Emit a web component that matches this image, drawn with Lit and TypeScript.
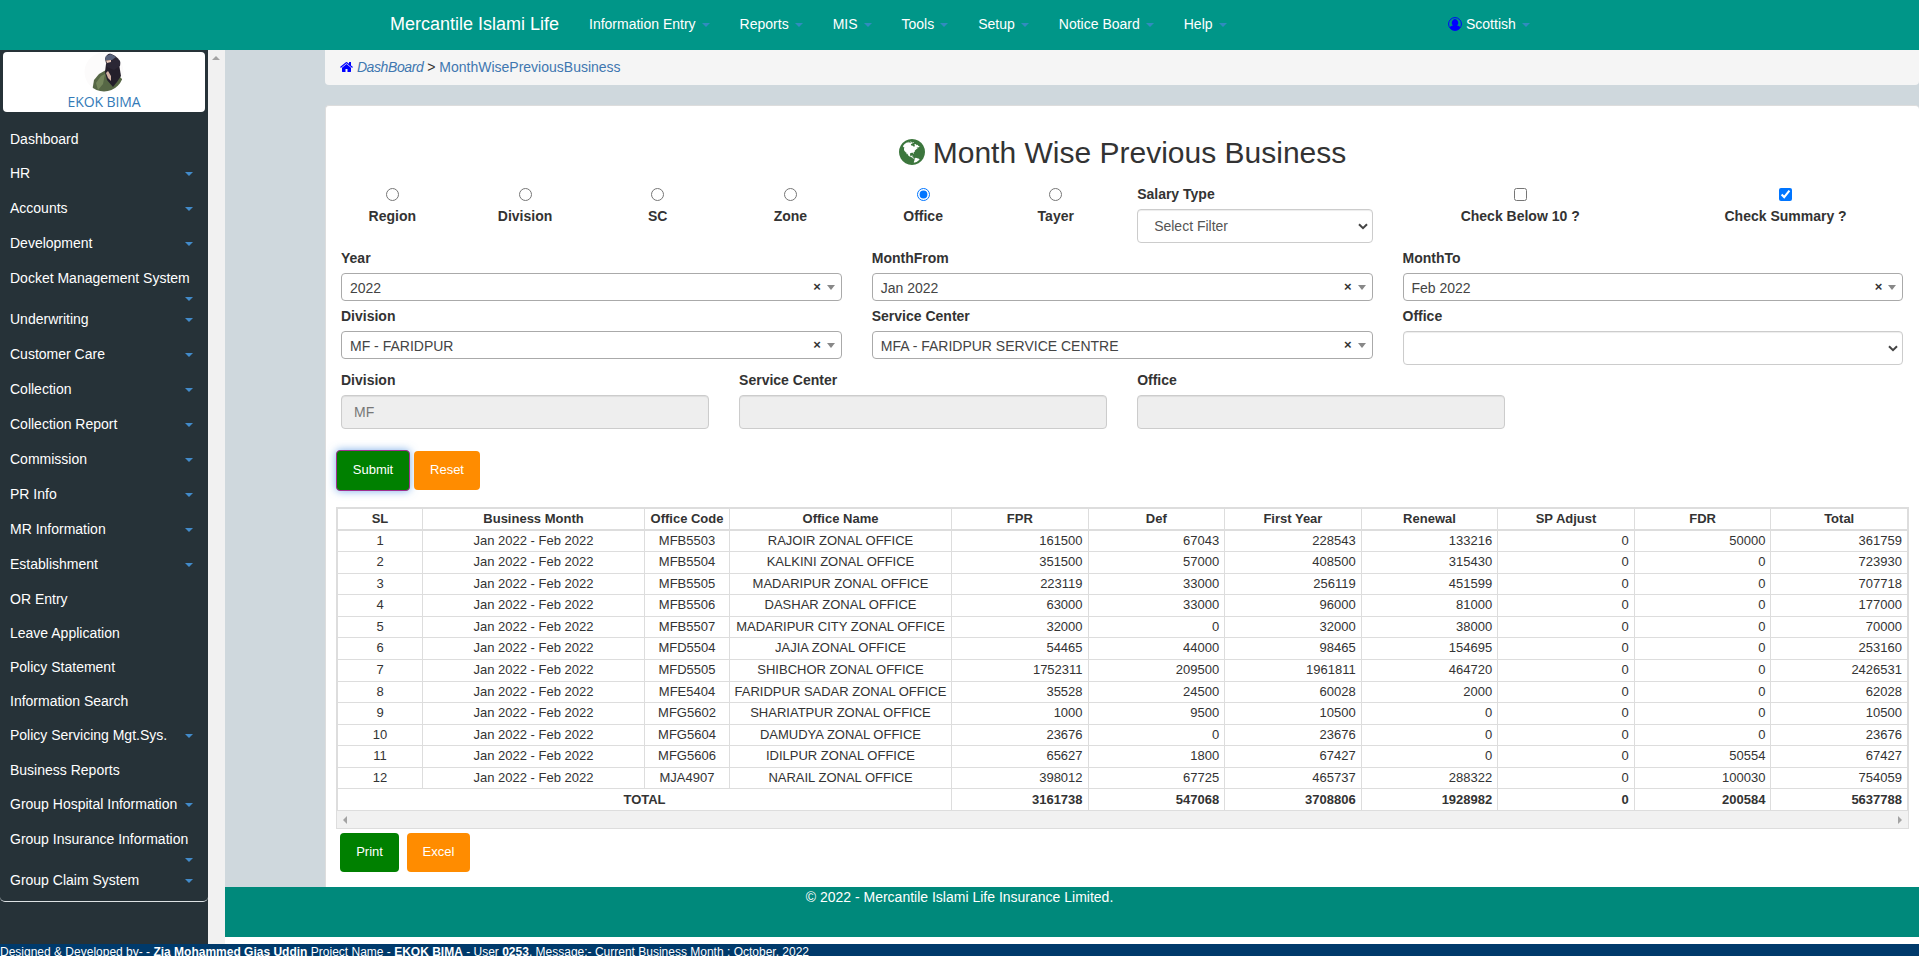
import { LitElement, html, css, svg, nothing } from "lit";
import { customElement } from "lit/decorators.js";

const MENU: [string, boolean, boolean?][] = [
  ["Dashboard", false], ["HR", true], ["Accounts", true], ["Development", true],
  ["Docket Management System", true, true], ["Underwriting", true], ["Customer Care", true],
  ["Collection", true], ["Collection Report", true], ["Commission", true], ["PR Info", true],
  ["MR Information", true], ["Establishment", true], ["OR Entry", false], ["Leave Application", false],
  ["Policy Statement", false], ["Information Search", false], ["Policy Servicing Mgt.Sys.", true],
  ["Business Reports", false], ["Group Hospital Information", true],
  ["Group Insurance Information", true, true], ["Group Claim System", true],
];
const NAV = ["Information Entry", "Reports", "MIS", "Tools", "Setup", "Notice Board", "Help"];
const LEVELS = ["Region", "Division", "SC", "Zone", "Office", "Tayer"];
const HEAD = ["SL", "Business Month", "Office Code", "Office Name", "FPR", "Def", "First Year", "Renewal", "SP Adjust", "FDR", "Total"];
const ROWS: [string, string, number[]][] = [
  ["MFB5503", "RAJOIR ZONAL OFFICE", [161500, 67043, 228543, 133216, 0, 50000, 361759]],
  ["MFB5504", "KALKINI ZONAL OFFICE", [351500, 57000, 408500, 315430, 0, 0, 723930]],
  ["MFB5505", "MADARIPUR ZONAL OFFICE", [223119, 33000, 256119, 451599, 0, 0, 707718]],
  ["MFB5506", "DASHAR ZONAL OFFICE", [63000, 33000, 96000, 81000, 0, 0, 177000]],
  ["MFB5507", "MADARIPUR CITY ZONAL OFFICE", [32000, 0, 32000, 38000, 0, 0, 70000]],
  ["MFD5504", "JAJIA ZONAL OFFICE", [54465, 44000, 98465, 154695, 0, 0, 253160]],
  ["MFD5505", "SHIBCHOR ZONAL OFFICE", [1752311, 209500, 1961811, 464720, 0, 0, 2426531]],
  ["MFE5404", "FARIDPUR SADAR ZONAL OFFICE", [35528, 24500, 60028, 2000, 0, 0, 62028]],
  ["MFG5602", "SHARIATPUR ZONAL OFFICE", [1000, 9500, 10500, 0, 0, 0, 10500]],
  ["MFG5604", "DAMUDYA ZONAL OFFICE", [23676, 0, 23676, 0, 0, 0, 23676]],
  ["MFG5606", "IDILPUR ZONAL OFFICE", [65627, 1800, 67427, 0, 0, 50554, 67427]],
  ["MJA4907", "NARAIL ZONAL OFFICE", [398012, 67725, 465737, 288322, 0, 100030, 754059]],
];
const TOTALS = [3161738, 547068, 3708806, 1928982, 0, 200584, 5637788];

const GLOBE = "M896 128q209 0 385.500 103t279.500 279.500 103 385.500-103 385.500-279.500 279.500-385.500 103-385.500-103-279.500-279.500-103-385.500 103-385.500 279.500-279.500 385.500-103zm274 521q-2 1-9.500 9.500t-13.500 9.500q2 0 4.500-5t5-11 3.500-7q6-7 22-15 14-6 52-12 34-8 51 11-2-2 9.500-13t14.500-12q3-2 15-4.500t15-7.500l2-22q-12 1-17.500-7t-6.500-21q0 2-6 8 0-7-4.500-8t-11.500 1-9 1q-10-3-15-7.500t-8-16.500-4-15q-2-5-9.500-11t-9.500-10q-1-2-2.500-5.500t-3-6.500-4-5.500-5.500-2.500-7 5-7.500 10-4.500 5q-3-2-6-1.500t-4.500 1-4.500 3-5 3.500q-3 2-8.500 3t-8.500 2q15-5-1-11-10-4-16-3 9-4 7.500-12t-8.500-14h5q-1-4-8.500-8.500t-17.500-8.500-13-6q-8-5-34-9.500t-33-.5q-5 6-4.500 10.500t4 14 3.500 12.500q1 6-5.500 13t-6.500 12q0 7 14 15.500t10 21.500q-3 8-16 16t-16 12q-5 8-1.500 18.500t10.500 16.500q2 2 1.500 4t-3.500 4.500-5.500 4-6.500 3.500l-3 2q-11 5-20.500-6t-13.500-26q-7-25-16-30-23-8-29 1-5-13-41-26-25-9-58-4 6-1 0-15-7-15-19-12 3-6 4-17.500t1-13.500q3-13 12-23 1-1 7-8.500t9.500-13.500.5-6q35 4 50-11 5-5 11.500-17t10.500-17q9-6 14-5.500t14.500 5.500 14.500 5q14 1 15.500-11t-7.500-20q12 1 3-17-4-7-8-9-12-4-27 5-8 4 2 8-1-1-9.500 10.500t-16.500 17.500-16-5q-1-1-5.500-13.500t-9.500-13.500q-8 0-16 15 3-8-11-15t-24-8q19-12-8-27-7-4-20.500-5t-19.500 4q-5 7-5.500 11.500t5 8 10.500 5.500 11.500 4 8.500 3q14 10 8 14-2 1-8.500 3.500t-11.500 4.500-6 4q-3 4 0 14t-2 14q-5-5-9-17.500t-7-16.500q7 9-25 6l-10-1q-4 0-16 2t-20.500 1-13.500-8q-4-8 0-20 1-4 4-2-4-3-11-9.500t-10-8.500q-46 15-94 41 6 1 12-1 5-2 13-6.500t10-5.500q34-14 42-7l5-5q14 16 20 25-7-4-30-1-20 6-22 12 7 12 5 18-4-3-11.500-10t-14.500-11-15-5q-16 0-22 1-146 80-235 222 7 7 12 8 4 1 5 9t2.500 11 11.500-3q9 8 3 19 1-1 44 27 19 17 21 21 3 11-10 18-1-2-9-9t-9-4q-3 5 .5 18.500t10.500 12.500q-7 0-9.500 16t-2.500 35.500-1 23.500l2 1q-3 12 5.500 34.500t21.500 19.500q-13 3 20 43 6 8 8 9 3 2 12 7.500t15 10 10 10.500q4 5 10 22.500t14 23.500q-2 6 9.500 20t10.500 23q-1 0-2.500 1t-2.500 1q3 7 15.500 14t15.500 13q1 3 2 10t3 11 8 2q2-20-24-62-15-25-17-29-3-5-5.500-15.500t-4.500-14.500q2 0 6 1.500t8.500 3.500 7.500 4 2 3q-3 7 2 17.500t12 18.500 17 19 12 13q6 6 14 19.500t0 13.500q9 0 20 10.500t17 19.500q5 8 8 26t5 24q2 7 8.500 13.500t12.500 9.500l16 8 13 7q5 2 18.500 10.500t21.500 11.500q10 4 16 4t14.500-2.500 13.500-3.500q15-2 29 15t21 21q36 19 55 11-2 1 .5 7.500t8 15.500 9 14.500 5.500 8.500q5 6 18 15t18 15q6-4 7-9-3 8 7 20t18 10q14-3 14-32-31 15-49-18 0-1-2.500-5.500t-4-8.500-2.500-8.500 0-7.500 5-3q9 0 10-3.500t-2-12.500-4-13q-1-8-11-20t-12-15q-5 9-16 8t-16-9q0 1-1.500 5.500t-1.500 6.500q-13 0-15-1 1-3 2.500-17.500t3.500-22.500q1-4 5.500-12t7.500-14.500 4-12.500-4.500-9.500-17.500-2.500q-19 1-26 20-1 3-3 10.500t-5 11.500-9 7q-7 3-24 2t-24-5q-13-8-22.500-29t-9.500-37q0-10 2.500-26.500t3-25-5.500-24.500q3-2 9-9.500t10-10.500q2-1 4.500-1.500t4.500 0 4-1.500 3-6q-1-1-4-3-3-3-4-3 7 3 28.500-1.500t27.500 1.500q15 11 22-2 0-1-2.500-9.500t-.5-13.500q5 27 29 9 3 3 15.500 5t17.500 5q3 2 7 5.500t5.500 4.500 5-.5 8.500-6.500q10 14 12 24 11 40 19 44 7 3 11 2t4.500-9.500 0-14-1.500-12.500l-1-8v-18l-1-8q-15-3-18.500-12t1.500-18.500 15-18.500q1-1 8-3.500t15.500-6.500 12.500-8q21-19 15-35 7 0 11-9-1 0-5-3t-7.500-5-4.500-2q9-5 2-16 5-3 7.500-11t7.500-10q9 12 21 2 8-8 1-16 5-7 20.500-10.500t18.500-9.500q7 2 8-2t1-12 3-12q4-5 15-9t13-5l17-11q3-4 0-4 18 2 31-11 10-11-6-20 3-6-3-9.500t-15-5.500q3-1 11.500-.5t10.500-1.500q15-10-7-16-17-5-43 12zm-163 877q206-36 351-189-3-3-12.500-4.500t-12.500-3.500q-18-7-24-8 1-7-2.500-13t-8-9-12.500-8-11-7q-2-2-7-6t-7-5.500-7.500-4.500-8.500-2-10 1l-3 1q-3 1-5.500 2.500t-5.500 3-4 3 0 2.500q-21-17-36-22-5-1-11-5.500t-10.500-7-10-1.500-11.500 7q-5 5-6 15t-2 13q-7-5 0-17.500t2-18.500q-3-6-10.500-4.500t-12 4.500-11.500 8.500-9 6.500-8.500 5.500-8.500 7.500q-3 4-6 12t-5 11q-2-4-11.500-6.500t-9.500-5.500q2 10 4 35t5 38q7 31-12 48-27 25-29 40-4 22 12 26 0 7-8 20.500t-7 21.500q0 6 2 16z";
const HOME = "M1472 992v480q0 26-19 45t-45 19h-384v-384h-256v384h-384q-26 0-45-19t-19-45v-480q0-1 .5-3t.5-3l575-474 575 474q1 2 1 6zm223-69l-62 74q-8 9-21 11h-3q-13 0-21-7l-692-577-692 577q-12 8-24 7-13-2-21-11l-62-74q-8-10-7-23.500t11-21.500l719-599q32-26 76-26t76 26l244 204v-195q0-14 9-23t23-9h192q14 0 23 9t9 23v408l219 182q10 8 11 21.500t-7 23.500z";

const caret = html`<i class="caret"></i>`;
const chevron = html`<svg class="chev" viewBox="0 0 10 7"><path d="M1 1.2 5 5.2 9 1.2" fill="none" stroke="#444" stroke-width="2"/></svg>`;
const combo = (label: string, value: string) => html`
  <div class="c4"><label>${label}</label>
    <div class="combo"><span>${value}</span><b>×</b><i></i></div></div>`;

@customElement("app-root")
export class AppRoot extends LitElement {
  static styles = css`
    :host { display: flex; flex-direction: column; height: 956px; overflow: hidden; background: #fff;
      font: 14px/20px "Liberation Sans", Arial, sans-serif; color: #333; }
    * { box-sizing: border-box; }
    .caret { display: inline-block; flex: none; border: 4px solid transparent; border-top-color: #428bca; border-bottom: 0; }
    header { flex: none; height: 50px; background: #009688; color: #fff; display: flex; padding-left: 390px; align-items: center; padding-bottom: 2px; }
    .brand { font-size: 18px; width: 199px; white-space: nowrap; }
    .nav { display: flex; gap: 30px; width: 859px; }
    .nav span, .user { display: flex; align-items: center; gap: 6px; white-space: nowrap; }
    header .caret { border-top-color: #318bc0; margin-top: 2px; }
    .user svg { width: 14px; height: 14px; margin-right: -2px; }
    .middle { flex: none; height: 894px; display: flex; }
    aside { width: 208px; background: #263238; color: #fff; flex: none; }
    .menu { height: 852px; border-bottom: 1px solid #dde2e4; border-radius: 0 0 5px 5px; padding-top: 2px; }
    .logo { margin: 0 3px 10px; height: 60px; background: #fff; border-radius: 4px; display: flex; flex-direction: column; align-items: center; }
    .logo svg { width: 40px; height: 40px; }
    .logo span { color: #337ab7; font: 14px/20px "Open Sans", sans-serif; letter-spacing: -.1px; }
    .mi { height: 34px; padding: 7px 15px 0 10px; display: flex; flex-wrap: wrap; justify-content: space-between; align-content: flex-start; white-space: nowrap; }
    .mi.drop { height: 35px; }
    .mi .caret { margin-top: 9px; margin-left: auto; }
    .mi.wrap { height: 41px; display: block; }
    .mi.wrap .caret { display: block; width: 8px; }
    .sbar { width: 17px; flex: none; background: #f1f1f1; padding: 6px 0 0 4px; }
    .sbar i { display: block; width: 0; border: 4px solid transparent; border-bottom-color: #a3a3a3; border-top: 0; }
    main { flex: 1; min-width: 0; display: flex; flex-direction: column; }
    .stage { height: 837px; background: #cfd8dd; padding-left: 100px; }
    .crumb { height: 35px; background: #f5f5f5; border-radius: 0 0 4px 4px; padding: 7px 0 0 15px; }
    .crumb svg { width: 13px; height: 14px; fill: #00f; vertical-align: -2px; }
    .crumb a, .crumb em { color: #3f77b0; }
    .crumb em { letter-spacing: -.4px; }
    .card { margin-top: 20px; height: 782px; background: #fff; border: 1px solid #ddd; border-width: 1px 0 0 1px; border-radius: 4px 4px 0 0; }
    h2 { margin: 0; padding-top: 30px; height: 78px; font-size: 30px; font-weight: 400; line-height: 33px; display: flex; justify-content: center; gap: 8px; }
    h2 svg { width: 26px; height: 26px; margin-top: 3px; fill: #3c763d; }
    .row { display: grid; grid-template-columns: repeat(12, 132.7px); }
    .row > div { padding: 0 15px; }
    .c1 { grid-column: span 1; } .c2 { grid-column: span 2; } .c3 { grid-column: span 3; } .c4 { grid-column: span 4; }
    label { display: block; font-weight: 700; height: 25px; }
    .tick { text-align: center; }
    .tick input { display: block; width: 13px; height: 13px; margin: 4px auto 5px; accent-color: #0075ff; }
    .r1 { height: 64px; } .r2 { height: 58px; } .r3 { height: 64px; } .r4 { height: 81px; }
    .sel { height: 34px; border: 1px solid #ccc; border-radius: 4px; background: #fff; box-shadow: inset 0 1px 1px rgba(0,0,0,.075);
      padding: 0 4px 0 16px; color: #555; display: flex; align-items: center; justify-content: space-between; }
    .chev { width: 10px; height: 7px; margin-left: auto; }
    .inp { height: 34px; border: 1px solid #ccc; border-radius: 4px; background: #eee; box-shadow: inset 0 1px 1px rgba(0,0,0,.075); padding: 6px 12px; color: #777; }
    .combo { height: 28px; border: 1px solid #aaa; border-radius: 4px; display: flex; align-items: center; padding: 1px 6px 0 8px; color: #444; }
    .combo span { flex: 1; }
    .combo b { font-size: 13px; margin: -1px 6px 0 0; color: #333; }
    .combo i { flex: none; border: 4px solid transparent; border-top: 5px solid #888; border-bottom: 0; }
    .btns { display: flex; }
    .btn { height: 39px; border-radius: 4px; color: #fff; text-align: center; padding-top: 9px; font-size: 13px; }
    .green { background: #008000; } .orange { background: #ff8c00; }
    .submit { width: 74px; height: 41px; margin: -1px 4px 0 10px; border: 1px solid #a03090; box-shadow: 0 0 8px rgba(82,148,226,.75); }
    .reset { width: 66px; } .print { width: 59px; margin: 0 8px 0 14px; } .excel { width: 63px; }
    .tw { margin: 16px 10px 0 10px; border: 1px solid #ddd; height: 322px; display: flex; flex-direction: column; justify-content: space-between; overflow: hidden; }
    table { border-collapse: collapse; width: 100%; table-layout: fixed; font-size: 13px; line-height: 18.57px; }
    td, th { border: 1px solid #ddd; padding: 1px 4px; text-align: center; white-space: nowrap; }
    th { border-bottom-width: 2px; padding: 1px 4px 0; }
    td.n { text-align: right; padding-right: 5px; }
    tfoot td { font-weight: 700; padding-top: 2px; padding-bottom: 0; }
    .hs { flex: none; height: 17px; background: #f1f1f1; display: flex; justify-content: space-between; align-items: center; padding: 0 6px; }
    .hs i { border: 4px solid transparent; border-right-color: #a3a3a3; border-left: 0; }
    .hs i:last-child { border: 4px solid transparent; border-left-color: #a3a3a3; border-right: 0; }
    .out { margin-top: 4px; }
    footer { height: 50px; background: #00897b; color: #fff; text-align: center; padding-right: 225px; }
    .credit { flex: none; height: 12px; background: #003a6b; color: #fff; font-size: 12px; line-height: 17px; white-space: nowrap; }
  `;

  render() {
    return html`
      <header>
        <div class="brand">Mercantile Islami Life</div>
        <div class="nav">${NAV.map((n) => html`<span>${n}${caret}</span>`)}</div>
        <div class="user">
          <svg viewBox="0 0 14 14"><circle cx="7" cy="7" r="6.4" fill="none" stroke="#00f" stroke-width="1"/>
            <path d="M1.600 10.600C2.600 9 4 8.700 4.900 8.500a3.100 3.600 0 1 1 4.200 0c.9.200 2.300.5 3.300 2.100A6.500 6.500 0 0 1 1.600 10.600z" fill="#00f"/></svg>
          Scottish${caret}</div>
      </header>
      <div class="middle">
        <aside><div class="menu">
          <div class="logo">
            <svg viewBox="0 0 40 40">
              <defs><clipPath id="disc"><circle cx="20" cy="20" r="19.500"/></clipPath></defs>
              <g clip-path="url(#disc)">
                <rect width="40" height="40" fill="#fcfbfb"/>
                <path d="M8 40 10 28 15 22 22 18 31 20 38 27 38 40z" fill="#566745"/>
                <path d="M12 31 17 24 21 22 19 32 14 38z" fill="#74865b"/>
                <path d="M22 12 35 12 37 24 33 30 29 35 23 28 21 20z" fill="#241f2b"/>
                <path d="M21 7C22 2 27 0 31 1 36 3 37 8 36 14L30 18 23 15z" fill="#2b2735"/>
                <path d="M21 8 22 4 27 2 32 5 28 8z" fill="#59637c"/>
                <path d="M22 8.500 27 8 27 10 23 11z" fill="#e6c7b8"/>
                <path d="M22 21 24 19 27 24 27 29 24 26z" fill="#d3b3a6"/>
              </g>
            </svg>
            <span>EKOK BIMA</span>
          </div>
          ${MENU.map(([t, d, w]) => html`<div class="mi ${d ? "drop" : ""} ${w ? "wrap" : ""}">${t}${d ? caret : nothing}</div>`)}
        </div></aside>
        <div class="sbar"><i></i></div>
        <main>
          <div class="stage">
            <div class="crumb"><svg viewBox="64 0 1664 1792">${svg`<path d=${HOME}/>`}</svg> <em>DashBoard</em> &gt; <a>MonthWisePreviousBusiness</a></div>
            <div class="card">
              <h2><svg viewBox="128 128 1536 1536">${svg`<path d=${GLOBE}/>`}</svg>Month Wise Previous Business</h2>
              <div class="row r1">
                ${LEVELS.map((l) => html`<div class="c1 tick"><input type="radio" name="level" .checked=${l === "Office"}><label>${l}</label></div>`)}
                <div class="c2"><label>Salary Type</label><div class="sel">Select Filter${chevron}</div></div>
                <div class="c2 tick"><input type="checkbox"><label>Check Below 10 ?</label></div>
                <div class="c2 tick"><input type="checkbox" .checked=${true}><label>Check Summary ?</label></div>
              </div>
              <div class="row r2">${combo("Year", "2022")}${combo("MonthFrom", "Jan 2022")}${combo("MonthTo", "Feb 2022")}</div>
              <div class="row r3">${combo("Division", "MF - FARIDPUR")}${combo("Service Center", "MFA - FARIDPUR SERVICE CENTRE")}
                <div class="c4"><label>Office</label><div class="sel">${chevron}</div></div></div>
              <div class="row r4">
                <div class="c3"><label>Division</label><div class="inp">MF</div></div>
                <div class="c3"><label>Service Center</label><div class="inp"></div></div>
                <div class="c3"><label>Office</label><div class="inp"></div></div>
              </div>
              <div class="btns"><div class="btn green submit">Submit</div><div class="btn orange reset">Reset</div></div>
              <div class="tw">
                <table>
                  <colgroup><col width="85"><col width="222"><col width="85"><col width="222">${TOTALS.map(() => html`<col>`)}</colgroup>
                  <thead><tr>${HEAD.map((h) => html`<th>${h}</th>`)}</tr></thead>
                  <tbody>${ROWS.map(([c, n, v], i) => html`<tr><td>${i + 1}</td><td>Jan 2022 - Feb 2022</td><td>${c}</td><td>${n}</td>${v.map((x) => html`<td class="n">${x}</td>`)}</tr>`)}</tbody>
                  <tfoot><tr><td colspan="4">TOTAL</td>${TOTALS.map((x) => html`<td class="n">${x}</td>`)}</tr></tfoot>
                </table>
                <div class="hs"><i></i><i></i></div>
              </div>
              <div class="btns out"><div class="btn green print">Print</div><div class="btn orange excel">Excel</div></div>
            </div>
          </div>
          <footer>© 2022 - Mercantile Islami Life Insurance Limited.</footer>
        </main>
      </div>
      <div class="credit">Designed &amp; Developed by- - <b>Zia Mohammed Gias Uddin</b> Project Name - <b>EKOK BIMA</b> - User <b>0253</b>, Message:- Current Business Month : October, 2022</div>
    `;
  }
}
